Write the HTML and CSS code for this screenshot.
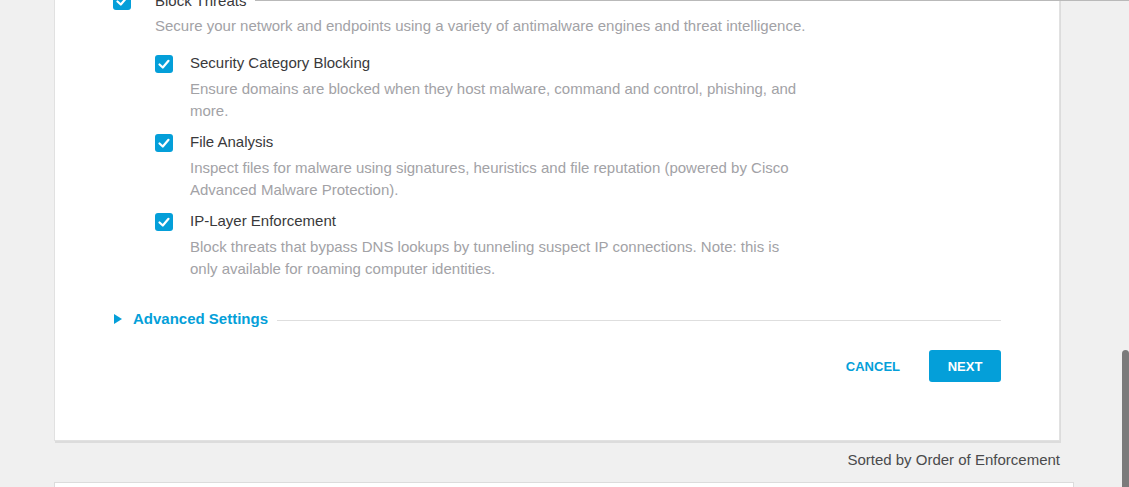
FILE: index.html
```html
<!DOCTYPE html>
<html lang="en">
<head>
<meta charset="utf-8">
<title>Block Threats</title>
<link rel="stylesheet" href="styles.css">
</head>
<body>
<div class="header-edge"></div>
<main class="main">
  <section class="card">
    <div class="opt opt-top">
      <span class="cb"><svg viewBox="0 0 18 18" width="18" height="18"><polyline points="4.5,9.5 7.8,12.5 13.5,5.8" fill="none" stroke="#fff" stroke-width="2.2" stroke-linecap="round" stroke-linejoin="round"/></svg></span>
      <div class="opt-body">
        <div class="opt-title">Block Threats</div>
        <p class="opt-desc">Secure your network and endpoints using a variety of antimalware engines and threat intelligence.</p>
        <div class="children">
          <div class="opt opt-child">
            <span class="cb"><svg viewBox="0 0 18 18" width="18" height="18"><polyline points="4.5,9.5 7.8,12.5 13.5,5.8" fill="none" stroke="#fff" stroke-width="2.2" stroke-linecap="round" stroke-linejoin="round"/></svg></span>
            <div class="opt-body">
              <div class="opt-title">Security Category Blocking</div>
              <p class="opt-desc">Ensure domains are blocked when they host malware, command and control, phishing, and more.</p>
            </div>
          </div>
          <div class="opt opt-child">
            <span class="cb"><svg viewBox="0 0 18 18" width="18" height="18"><polyline points="4.5,9.5 7.8,12.5 13.5,5.8" fill="none" stroke="#fff" stroke-width="2.2" stroke-linecap="round" stroke-linejoin="round"/></svg></span>
            <div class="opt-body">
              <div class="opt-title">File Analysis</div>
              <p class="opt-desc">Inspect files for malware using signatures, heuristics and file reputation (powered by Cisco Advanced Malware Protection).</p>
            </div>
          </div>
          <div class="opt opt-child">
            <span class="cb"><svg viewBox="0 0 18 18" width="18" height="18"><polyline points="4.5,9.5 7.8,12.5 13.5,5.8" fill="none" stroke="#fff" stroke-width="2.2" stroke-linecap="round" stroke-linejoin="round"/></svg></span>
            <div class="opt-body">
              <div class="opt-title">IP-Layer Enforcement</div>
              <p class="opt-desc">Block threats that bypass DNS lookups by tunneling suspect IP connections. Note: this is only available for roaming computer identities.</p>
            </div>
          </div>
        </div>
      </div>
    </div>

    <div class="advanced">
      <svg class="tri" viewBox="0 0 8 10" width="8" height="10"><polygon points="0,0 8,5 0,10" fill="#049fd9"/></svg>
      <span class="advanced-label">Advanced Settings</span>
      <span class="advanced-rule"></span>
    </div>

    <div class="actions">
      <button class="btn btn-link" type="button">CANCEL</button>
      <button class="btn btn-primary" type="button">NEXT</button>
    </div>
  </section>

  <div class="sorted">Sorted by Order of Enforcement</div>

  <section class="card card-next"></section>
</main>
<div class="scroll-thumb"></div>
</body>
</html>
```

FILE: styles.css
```css
html, body {
  margin: 0;
  padding: 0;
}

body {
  background: #f0f0f0;
  font-family: "Liberation Sans", Arial, sans-serif;
  overflow: hidden;
  height: 487px;
}

.header-edge {
  position: fixed;
  top: 0;
  left: 255px;
  right: 0;
  height: 1px;
  background: #b9b9b9;
  z-index: 5;
}

.scroll-thumb {
  position: fixed;
  top: 350px;
  right: 0;
  width: 7px;
  height: 160px;
  background: #7b7b7b;
  border-radius: 4px 4px 0 0;
  z-index: 5;
}

.main {
  padding-left: 54px;
}

.card {
  box-sizing: border-box;
  width: 1006px;
  margin-top: -11px;
  background: #fff;
  border: 1px solid #e1e1e1;
  box-shadow: 1px 2px 0 #dcdcdc;
  padding: 0 58px 58px 58px;
}

.opt {
  display: grid;
  grid-template-columns: 18px 1fr;
  column-gap: 24px;
}

.opt-child {
  column-gap: 17px;
}

.cb {
  width: 18px;
  height: 18px;
  margin-top: 2px;
  border-radius: 3px;
  background: #049fd9;
  display: block;
}

.opt-child .cb {
  margin-top: 3px;
}

.cb svg {
  display: block;
}

.opt-title {
  font-size: 15px;
  line-height: 22px;
  color: #39393b;
}

.opt-desc {
  margin: 3px 0 0;
  font-size: 15px;
  line-height: 22px;
  color: #a2a2a6;
}

.opt-child .opt-desc {
  margin-top: 4px;
  max-width: 610px;
}

.children {
  margin-top: 15px;
  display: flex;
  flex-direction: column;
  gap: 9px;
}

.advanced {
  margin-top: 28px;
  display: flex;
  align-items: center;
  height: 22px;
}

.tri {
  display: block;
  margin-left: 1px;
}

.advanced-label {
  margin-left: 11px;
  font-size: 15px;
  font-weight: bold;
  color: #049fd9;
  line-height: 22px;
}

.advanced-rule {
  flex: 1;
  height: 1px;
  margin-left: 9px;
  margin-top: 2px;
  background: #dedede;
}

.actions {
  margin-top: 20px;
  display: flex;
  justify-content: flex-end;
  align-items: center;
  gap: 29px;
}

.btn {
  font-family: "Liberation Sans", Arial, sans-serif;
  font-size: 13px;
  font-weight: bold;
  border: 0;
  padding: 0;
  cursor: pointer;
}

.btn-link {
  background: none;
  color: #049fd9;
  height: 32px;
}

.btn-primary {
  width: 72px;
  height: 32px;
  border-radius: 3px;
  background: #049fd9;
  color: #fff;
}

.sorted {
  width: 1006px;
  margin-top: 9px;
  text-align: right;
  font-size: 15px;
  line-height: 20px;
  color: #4a4a4c;
}

.card-next {
  width: 1020px;
  height: 60px;
  margin-top: 12px;
  padding: 0;
  box-shadow: none;
  border-color: #dcdcdc;
}
```
